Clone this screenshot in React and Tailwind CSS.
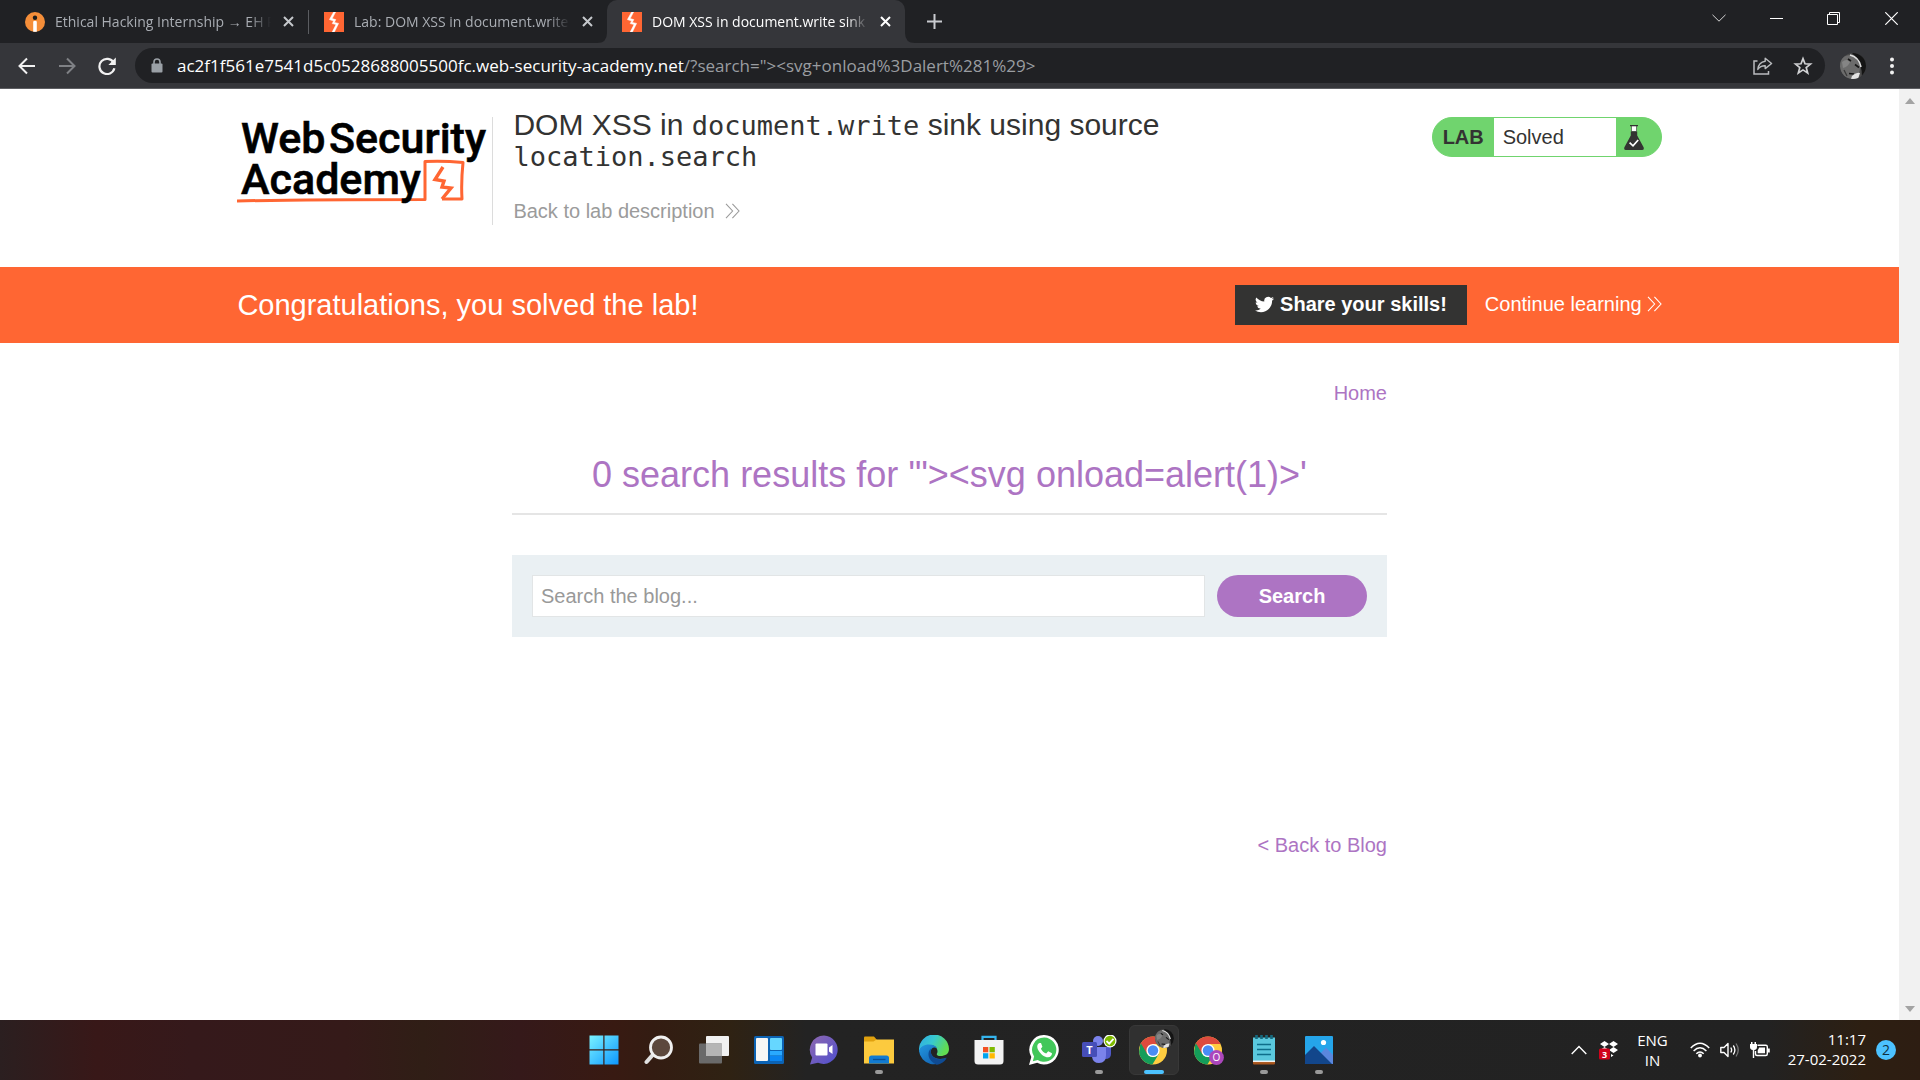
import React from "react";

function PortSwiggerIcon() {
  return (
    <svg viewBox="0 0 20 20" className="size-5 shrink-0" aria-hidden="true">
      <rect width="20" height="20" fill="#ff6633" />
      <path d="M9.6 0 L5.4 7.6 L9.6 9 L8.2 11.6 L12 12.6 L8.2 20 L10.4 20 L14.6 11.4 L10.4 10.4 L11.8 7.6 L8.2 6.6 L11.6 0 Z" fill="#fff" stroke="#fff" strokeWidth=".5" />
    </svg>
  );
}

function InternIcon() {
  return (
    <svg viewBox="0 0 20 20" className="size-5 shrink-0" aria-hidden="true">
      <circle cx="10" cy="10" r="10" fill="#f58e39" />
      <circle cx="10" cy="5.8" r="2.2" fill="#1c1c1c" />
      <path d="M8.2 9.5 Q10 7.8 11.8 9.5 V19.8 H8.2 Z" fill="#fff" />
    </svg>
  );
}

function Cross({ color }) {
  return (
    <svg viewBox="0 0 11 11" className="size-[11px]" aria-hidden="true">
      <path d="M1 1 L10 10 M10 1 L1 10" stroke={color} strokeWidth="2" />
    </svg>
  );
}

function Tab({ icon, title, active }) {
  return (
    <div
      className={
        active
          ? "relative flex h-full w-[298px] items-center rounded-t-[10px] bg-[#35363a] pl-[15px] pr-3.5 text-white"
          : "relative flex h-full w-[298px] items-center pl-[15px] pr-3.5 text-[#a9adb3]"
      }
    >
      {icon}
      <span className="ml-2.5 flex-1 overflow-hidden whitespace-nowrap text-[14px] leading-5 [mask-image:linear-gradient(to_right,#000_90%,transparent)]">
        {title}
      </span>
      <button aria-label="Close tab" className="ml-3">
        <Cross color={active ? "#ffffff" : "#c5c8cc"} />
      </button>
      {active && (
        <svg viewBox="0 0 10 10" className="absolute bottom-0 -left-2.5 size-2.5" aria-hidden="true">
          <path d="M10 0 V10 H0 Q10 10 10 0Z" fill="#35363a" />
        </svg>
      )}
      {active && (
        <svg viewBox="0 0 10 10" className="absolute bottom-0 -right-2.5 size-2.5" aria-hidden="true">
          <path d="M0 0 V10 H10 Q0 10 0 0Z" fill="#35363a" />
        </svg>
      )}
    </div>
  );
}

function LionAvatar({ className }) {
  return (
    <svg viewBox="0 0 26 26" className={className} aria-hidden="true">
      <defs>
        <clipPath id="avatarClip">
          <circle cx="13" cy="13" r="13" />
        </clipPath>
      </defs>
      <g clipPath="url(#avatarClip)">
        <rect width="26" height="26" fill="#4a4a4a" />
        <path d="M12 0 H26 V26 H22 Q23 10 12 0Z" fill="#141414" />
        <path d="M0 8 Q4 1 12 2 Q20 6 20 14 Q20 22 14 26 H6 Q-1 20 0 8Z" fill="#6c6c6c" />
        <path d="M2 9 Q7 5 10 9 Q8 14 3 15Z" fill="#858585" />
        <path d="M10 2 Q19 4 21 14" stroke="#dedede" strokeWidth="1.6" fill="none" />
        <path d="M8 6 L11 8 M15 11.500 L19 14.500 M9 20.500 L14 21" stroke="#161616" strokeWidth="1.6" />
        <path d="M12 23 Q17 19 20 20 L18 26 H11Z" fill="#e2e2e2" />
        <path d="M4 17 L7 23" stroke="#3a3a3a" strokeWidth="1.2" />
      </g>
    </svg>
  );
}

function BrowserChrome() {
  return (
    <header className="font-['Open_Sans',sans-serif]">
      <div className="flex h-[43px] items-stretch bg-[#202124] pl-2.5">
        <Tab icon={<InternIcon />} title="Ethical Hacking Internship → EH P" />
        <div className="my-auto h-6 w-px bg-[#5b5d61]" />
        <Tab icon={<PortSwiggerIcon />} title="Lab: DOM XSS in document.write" />
        <Tab icon={<PortSwiggerIcon />} title="DOM XSS in document.write sink" active />
        <button aria-label="New tab" className="ml-[22px]">
          <svg viewBox="0 0 15 15" className="size-[15px]" aria-hidden="true">
            <path d="M7.5 0 V15 M0 7.5 H15" stroke="#c9cbcf" strokeWidth="2" />
          </svg>
        </button>
        <div className="ml-auto flex h-9 items-center">
          <button aria-label="Search tabs" className="flex w-[58px] justify-center">
            <svg viewBox="0 0 14 8" className="h-2 w-3.5" aria-hidden="true">
              <path d="M.5 .8 L7 7.2 L13.5 .8" stroke="#d5d5d5" fill="none" />
            </svg>
          </button>
          <button aria-label="Minimize" className="flex w-[57px] justify-center">
            <svg viewBox="0 0 13 13" className="size-[13px]" aria-hidden="true">
              <path d="M0 6.5 H13" stroke="#fff" />
            </svg>
          </button>
          <button aria-label="Restore" className="flex w-[57px] justify-center">
            <svg viewBox="0 0 13 13" className="size-[13px]" aria-hidden="true">
              <path d="M.5 2.5 H10.5 V12.5 H.5Z M2.5 2.5 V.5 H12.5 V10.5 H10.5" stroke="#fff" fill="none" />
            </svg>
          </button>
          <button aria-label="Close" className="flex w-[58px] justify-center">
            <svg viewBox="0 0 13 13" className="size-[13px]" aria-hidden="true">
              <path d="M.3 .3 L12.7 12.7 M12.7 .3 L.3 12.7" stroke="#fff" strokeWidth="1.2" />
            </svg>
          </button>
        </div>
      </div>
      <div className="flex h-[46px] items-center border-b border-[#5d5e62] bg-[#35363a] pl-[18px] pr-[26px]">
        <button aria-label="Back">
          <svg viewBox="0 0 18 18" className="size-[18px]" aria-hidden="true">
            <path d="M17 9 H2 M9 1.5 L1.5 9 L9 16.5" stroke="#f1f1f1" strokeWidth="2" fill="none" />
          </svg>
        </button>
        <button aria-label="Forward" className="ml-[22px]">
          <svg viewBox="0 0 18 18" className="size-[18px]" aria-hidden="true">
            <path d="M1 9 H16 M9 1.5 L16.5 9 L9 16.5" stroke="#7f8185" strokeWidth="2" fill="none" />
          </svg>
        </button>
        <button aria-label="Reload" className="ml-[22px]">
          <svg viewBox="0 0 18 18" className="size-[18px]" aria-hidden="true">
            <path d="M15.6 5.6 A7.6 7.6 0 1 0 16.4 11.3" stroke="#f1f1f1" strokeWidth="2.2" fill="none" />
            <path d="M17.8 0.6 V8 H10.4Z" fill="#f1f1f1" />
          </svg>
        </button>
        <div className="ml-[19px] flex h-[35px] flex-1 items-center rounded-full bg-[#202124] pl-4 pr-3">
          <svg viewBox="0 0 12 15" className="h-[15px] w-3" aria-hidden="true">
            <rect x=".5" y="5.5" width="11" height="9" rx="1" fill="#9aa0a6" />
            <path d="M3 6 V4 a3 3 0 0 1 6 0 V6" stroke="#9aa0a6" strokeWidth="1.6" fill="none" />
          </svg>
          <div className="ml-3.5 flex-1 whitespace-nowrap text-[17px] leading-6 text-[#9a9da1]">
            <span className="text-white">ac2f1f561e7541d5c0528688005500fc.web-security-academy.net</span>
            {'/?search="><svg+onload%3Dalert%281%29>'}
          </div>
          <button aria-label="Share">
            <svg viewBox="0 0 20 18" className="h-[18px] w-5" aria-hidden="true">
              <path d="M4.5 4 H1 V17 H15.5 V14" stroke="#b9bbbe" strokeWidth="1.5" fill="none" />
              <path d="M12.2 1.2 L18.6 6.5 L12.2 11.6 V8.8 Q7.6 8.6 4.8 12.4 Q5.6 5 12.2 4.2Z" stroke="#b9bbbe" strokeWidth="1.4" fill="none" strokeLinejoin="round" />
            </svg>
          </button>
          <button aria-label="Bookmark" className="ml-5">
            <svg viewBox="0 0 20 20" className="size-5" aria-hidden="true">
              <path d="M10 2.6 L12 7.8 L17.5 8.1 L13.2 11.6 L14.7 17 L10 13.9 L5.3 17 L6.8 11.6 L2.5 8.1 L8 7.8Z" stroke="#d0d1d3" strokeWidth="1.7" fill="none" />
            </svg>
          </button>
        </div>
        <button aria-label="Profile" className="ml-[15px]">
          <LionAvatar className="size-[26px]" />
        </button>
        <button aria-label="Menu" className="ml-6">
          <svg viewBox="0 0 4 18" className="h-[18px] w-1" aria-hidden="true">
            <circle cx="2" cy="2.5" r="2" fill="#f1f1f1" />
            <circle cx="2" cy="9" r="2" fill="#f1f1f1" />
            <circle cx="2" cy="15.5" r="2" fill="#f1f1f1" />
          </svg>
        </button>
      </div>
    </header>
  );
}

function AcademyLogo() {
  return (
    <svg viewBox="0 0 255 108" className="h-[108px] w-[255px]" role="img" aria-label="Web Security Academy">
      <path d="M0 84 Q60 82.500 188 82.500 V44.500 Q206 43.500 226 45.500 Q224 65 225 82 L205 82" fill="none" stroke="#ff6633" strokeWidth="3" strokeLinejoin="round" />
      <path d="M206 50 L198 62.500 L207 64 L205 70 L214 71 L205 82" fill="none" stroke="#ff6633" strokeWidth="3.4" />
      <g fill="#000" stroke="#000" strokeWidth=".6" fontFamily="Roboto, sans-serif" fontSize="43" fontWeight="500">
        <text x="4" y="36">Web</text>
        <text x="92" y="36">Security</text>
        <text x="4" y="77">Academy</text>
      </g>
    </svg>
  );
}

function Chevrons({ color }) {
  return (
    <svg viewBox="0 0 15 16" className="h-4 w-[15px] shrink-0" aria-hidden="true">
      <path d="M1 .8 L7.6 8 L1 15.2 M7.4 .8 L14 8 L7.4 15.2" stroke={color} strokeWidth="1.1" fill="none" />
    </svg>
  );
}

function LabStatus() {
  return (
    <div className="mt-[7px] flex h-10 w-[230px] items-stretch overflow-hidden rounded-full border border-[#70d46e] bg-[#70d46e] text-[20px] leading-[38px] text-[#333332]">
      <span className="w-[61px] pl-2.5 font-bold">LAB</span>
      <span className="w-[122px] bg-white pl-[9px]">Solved</span>
      <svg viewBox="0 0 20 25" className="ml-2 mt-[7px] h-[25px] w-5" aria-hidden="true">
        <path d="M6 .6 H14" stroke="#333332" strokeWidth="1.2" />
        <path d="M7.500 1 H12.500 V6.500 H7.500Z" fill="#fff" stroke="#333332" strokeWidth=".6" />
        <path d="M6.8 6.500 H13.2 V10.5 L19.6 22.2 Q20.5 25 18 25 H2 Q-.5 25 .4 22.2 L6.8 10.5Z" fill="#333332" />
        <path d="M5.6 17.6 L9 20.8 L14.2 15" stroke="#fff" strokeWidth="1.7" fill="none" />
      </svg>
    </div>
  );
}

function Page() {
  return (
    <div className="flex min-h-0 flex-1 bg-white font-['Liberation_Sans',Arial,sans-serif] text-[20px] leading-[30px] text-[#333332]">
      <div className="flex-1">
        <section className="mx-auto flex h-[178px] w-3/4 items-start pt-[21px]">
          <a href="#academy" className="mt-[7px] shrink-0 border-r border-[#dcdcdc]">
            <AcademyLogo />
          </a>
          <div className="ml-5 flex-1">
            <h2 className="max-w-[700px] text-[30px] leading-[30px]">
              DOM XSS in <code className="font-['DejaVu_Sans_Mono',monospace] text-[27px]">document.write</code> sink using source{" "}
              <code className="font-['DejaVu_Sans_Mono',monospace] text-[27px]">location.search</code>
            </h2>
            <a href="#lab" className="mt-6 flex items-center gap-2.5 text-[#9b9b9b]">
              Back to lab description <Chevrons color="#9b9b9b" />
            </a>
          </div>
          <LabStatus />
        </section>

        <section className="bg-[#ff6633] text-white">
          <div className="mx-auto flex h-[76px] w-3/4 items-center">
            <h4 className="flex-1 text-[29px]">Congratulations, you solved the lab!</h4>
            <button className="flex h-10 items-center gap-1.5 bg-[#333332] px-5 pb-0.5 font-bold">
              <svg viewBox="0 0 24 24" className="size-[19px]" aria-hidden="true">
                <path fill="#fff" d="M23.95 4.57a10 10 0 0 1-2.82.77 4.96 4.96 0 0 0 2.16-2.72c-.95.55-2 .96-3.13 1.18a4.92 4.92 0 0 0-8.38 4.48C7.69 8.1 4.07 6.13 1.64 3.16a4.92 4.92 0 0 0 1.52 6.57 4.9 4.9 0 0 1-2.23-.61v.06a4.92 4.92 0 0 0 3.95 4.83 5 5 0 0 1-2.21.08 4.94 4.94 0 0 0 4.6 3.42A9.87 9.87 0 0 1 0 19.54a13.99 13.99 0 0 0 7.55 2.21c9.05 0 14-7.5 14-13.98 0-.21 0-.42-.02-.63a9.94 9.94 0 0 0 2.46-2.55z" />
              </svg>
              Share your skills!
            </button>
            <a href="#continue" className="ml-[18px] flex items-center gap-[5px] pb-0.5">
              Continue learning <Chevrons color="#ffffff" />
            </a>
          </div>
        </section>

        <main className="mx-auto mt-[35px] w-[875px] max-w-full">
          <nav className="flex justify-end text-[#ad74c3]">
            <a href="#home">Home</a>
          </nav>
          <h1 className="mt-11 text-center text-[36px] leading-[45px] text-[#ad74c3]">
            {"0 search results for '\"><svg onload=alert(1)>'"}
          </h1>
          <hr className="mt-4 border-t-2 border-[#e5e5e5]" />
          <form className="mt-10 flex gap-3 bg-[#eaf0f3] p-5" onSubmit={(e) => e.preventDefault()}>
            <input
              type="text"
              aria-label="Search the blog"
              placeholder="Search the blog..."
              className="h-[42px] min-w-0 flex-1 border border-[#e2e5e6] bg-white px-2 placeholder:text-[#999999]"
            />
            <button className="h-[42px] w-[150px] rounded-full bg-[#ad74c3] font-bold text-white">Search</button>
          </form>
          <div className="mt-[193px] flex justify-end text-[#ad74c3]">
            <a href="#blog">&lt; Back to Blog</a>
          </div>
        </main>
      </div>
      <div className="flex w-[21px] flex-col items-center justify-between bg-[#f1f1f1] py-2" aria-hidden="true">
        <svg viewBox="0 0 10 6" className="mt-px h-1.5 w-2.5"><path d="M5 0 L10 6 H0Z" fill="#a3a3a3" /></svg>
        <svg viewBox="0 0 10 6" className="h-1.5 w-2.5"><path d="M5 6 L10 0 H0Z" fill="#a3a3a3" /></svg>
      </div>
    </div>
  );
}

function Chrome({ children, id }) {
  return (
    <svg viewBox="0 0 30 30" className="size-[30px]">
      <clipPath id={id}><circle cx="14" cy="15.5" r="14" /></clipPath>
      <g clipPath={"url(#" + id + ")"}>
        <rect width="30" height="30" fill="#ffcd40" />
        <path d="M0 0 H30 V9 H14 L8 19 L0 8Z" fill="#dd4b3e" />
        <path d="M1.5 7.5 L8.2 19 L14 22.3 L19.8 19 L12.5 31 L-2 30 Z" fill="#149d5a" />
      </g>
      <circle cx="14" cy="15.5" r="6.6" fill="#fff" />
      <circle cx="14" cy="15.5" r="5.2" fill="#4a8cf5" />
      {children}
    </svg>
  );
}

const APPS = [
  {
    name: "Start",
    icon: (
      <svg viewBox="0 0 30 30" className="size-[30px]">
        <defs>
          <linearGradient id="win" gradientUnits="userSpaceOnUse" x1="0" y1="0" x2="30" y2="30">
            <stop offset="0" stopColor="#7cf4ff" /><stop offset="1" stopColor="#0b95ff" />
          </linearGradient>
        </defs>
        <path d="M.5 .5 H14.3 V14.3 H.5Z M15.5 .5 H29.5 V14.3 H15.5Z M.5 15.5 H14.3 V29.5 H.5Z M15.5 15.5 H29.5 V29.5 H15.5Z" fill="url(#win)" />
      </svg>
    ),
  },
  {
    name: "Search",
    icon: (
      <svg viewBox="0 0 30 30" className="size-[30px]">
        <path d="M9.5 19 L2.5 27" stroke="#e1e1e1" strokeWidth="4" strokeLinecap="round" />
        <circle cx="17" cy="12.5" r="10.5" fill="#5c483d" stroke="#f0f0f0" strokeWidth="2.8" />
      </svg>
    ),
  },
  {
    name: "Task view",
    icon: (
      <svg viewBox="0 0 30 30" className="size-[30px]">
        <rect x="7" y="1" width="23" height="20" rx="1" fill="#f1f1f1" />
        <rect x="0" y="8.500" width="23" height="20" rx="1" fill="#6a6a6a" />
        <rect x="7" y="8.500" width="16" height="12.500" fill="#b5b5b5" />
      </svg>
    ),
  },
  {
    name: "Widgets",
    icon: (
      <svg viewBox="0 0 30 30" className="size-[30px]">
        <rect y="1" width="30" height="28" rx="1.500" fill="#0c63b4" />
        <rect x="2" y="3" width="12" height="23" rx="1" fill="#f6f6f6" />
        <rect x="16" y="3" width="12" height="12" rx="1" fill="#66d7ff" />
        <rect x="16" y="16" width="12" height="4.500" fill="#29a9ff" />
        <rect x="16" y="21" width="12" height="5" fill="#0a85f2" />
      </svg>
    ),
  },
  {
    name: "Chat",
    icon: (
      <svg viewBox="0 0 30 30" className="size-[30px]">
        <defs>
          <linearGradient id="chat" x1="0" y1="0" x2="1" y2="1">
            <stop offset="0" stopColor="#8f68ae" /><stop offset="1" stopColor="#4e4fd0" />
          </linearGradient>
        </defs>
        <path d="M15 .5 A14.200 14.200 0 1 1 9 27.800 L1 29.500 L3.200 22.500 A14.200 14.200 0 0 1 15 .5Z" fill="url(#chat)" />
        <rect x="6.500" y="8.500" width="12" height="12" rx="1" fill="#fff" />
        <path d="M20 12.500 L23.500 10 V19 L20 16.500Z" fill="#fff" />
      </svg>
    ),
  },
  {
    name: "File Explorer",
    dot: true,
    icon: (
      <svg viewBox="0 0 30 30" className="size-[30px]">
        <path d="M0 2.500 Q0 1.500 1 1.500 H10 L13 5 V10 H0Z" fill="#e0a10e" />
        <path d="M0 6.500 H9.500 L12.500 4.500 H30 V28.500 H0Z" fill="#fcca3e" />
        <path d="M5 28.500 V23 Q5 20.500 7.500 20.500 H22.500 Q25 20.500 25 23 V28.500Z" fill="#127bd1" />
        <path d="M9 24.500 H21.500" stroke="#0b4f96" strokeWidth="1.300" />
      </svg>
    ),
  },
  {
    name: "Edge",
    icon: (
      <svg viewBox="0 0 30 30" className="size-[30px]">
        <defs>
          <linearGradient id="edgeTop" x1="0" y1="0" x2="1" y2=".4">
            <stop offset="0" stopColor="#2fa9e6" /><stop offset=".5" stopColor="#38c9cf" /><stop offset="1" stopColor="#61dd52" />
          </linearGradient>
          <linearGradient id="edgeBase" x1="0" y1="0" x2="1" y2="1">
            <stop offset="0" stopColor="#2397e0" /><stop offset="1" stopColor="#0e57a8" />
          </linearGradient>
        </defs>
        <path d="M0 15 A15 15 0 0 1 30 14 C30 19 26 21 21.500 21 C18.500 21 17.200 19.800 18 18.500 C20 14 16 10 11 10 C5 10 1 13 0 17Z" fill="url(#edgeTop)" />
        <path d="M0 16 C1 12 5 9.500 10 9.500 C14 9.500 17 11 18 13 C13 11 11 15 12 18.500 C13.500 23.500 21 25.500 27.500 22.500 A15 15 0 0 1 0 16Z" fill="url(#edgeBase)" />
        <path d="M12 13.500 C8 17 8 25 17.500 29.800 C22 29 26 26.500 27.600 23 C22 25.500 14.500 24 12.500 19.500 C11.600 17 11.500 15 12 13.500Z" fill="#0f4b93" />
      </svg>
    ),
  },
  {
    name: "Microsoft Store",
    icon: (
      <svg viewBox="0 0 30 30" className="size-[30px]">
        <path d="M8.500 6 V1.800 H21.500 V6" stroke="#35b5ee" strokeWidth="2.200" fill="none" />
        <path d="M.5 5 H29.500 V26 Q29.500 29.500 26 29.500 H4 Q.5 29.500 .5 26Z" fill="#f3f3f3" />
        <path d="M9 12 H14.300 V17.300 H9Z" fill="#f25022" /><path d="M15.500 12 H20.800 V17.300 H15.500Z" fill="#7fba00" />
        <path d="M9 18.200 H14.300 V23.500 H9Z" fill="#00a4ef" /><path d="M15.500 18.200 H20.800 V23.500 H15.500Z" fill="#ffb900" />
      </svg>
    ),
  },
  {
    name: "WhatsApp",
    icon: (
      <svg viewBox="0 0 30 30" className="size-[30px]">
        <path d="M15.300 0 A14.700 14.700 0 1 1 8.200 27.700 L0 30 L2.300 22 A14.700 14.700 0 0 1 15.300 0Z" fill="#fff" />
        <path d="M15.300 2.600 A12.100 12.100 0 1 1 8.700 24.900 L3.800 26.200 L5.100 21.400 A12.100 12.100 0 0 1 15.300 2.600Z" fill="#42c75a" />
        <path d="M10.500 8 C8 9 7.500 12 9.500 15.500 C12 19.500 15.500 22.300 19 22.300 C21.500 22.300 23 20.500 23 18.300 L19.200 16.300 L17.200 18.600 C14.800 17.700 13 16 11.900 13.700 L13.400 11.800 L12 8Z" fill="#fff" />
      </svg>
    ),
  },
  {
    name: "Teams",
    dot: true,
    icon: (
      <svg viewBox="0 0 36 30" className="h-[30px] w-9">
        <circle cx="17" cy="6" r="5" fill="#7b83eb" />
        <path d="M22 12 H30 V19 Q30 24 24 24Z" fill="#5059c9" />
        <path d="M11 12 H25 V20 Q25 28 18 28 Q12 28 11 22Z" fill="#7b83eb" />
        <rect x="1" y="7" width="15" height="15" rx="1.500" fill="#464eb8" />
        <text x="8.500" y="18.500" fontFamily="Open Sans, sans-serif" fontWeight="700" fontSize="11" fill="#fff" textAnchor="middle">T</text>
        <circle cx="29" cy="6" r="6.500" fill="#fff" />
        <circle cx="29" cy="6" r="5.300" fill="#7fba00" />
        <path d="M25.500 6 L28.200 8.600 L32.500 3.800" stroke="#fff" strokeWidth="1.800" fill="none" />
      </svg>
    ),
  },
  {
    name: "Chrome",
    active: true,
    icon: (
      <span className="relative block">
        <Chrome id="chromeA" />
        <LionAvatar className="absolute -top-1.5 left-4 size-[19px]" />
      </span>
    ),
  },
  {
    name: "Chrome, second profile",
    icon: (
      <Chrome id="chromeB">
        <circle cx="22.500" cy="22.500" r="7.400" fill="#ab47bc" />
        <text x="22.500" y="26" fontFamily="Open Sans, sans-serif" fontSize="10" fill="#fff" textAnchor="middle">O</text>
      </Chrome>
    ),
  },
  {
    name: "Notepad",
    dot: true,
    icon: (
      <svg viewBox="0 0 30 30" className="size-[30px]">
        <rect x="4" y="25" width="22" height="4.500" rx="1" fill="#a8551c" />
        <path d="M4 2.500 H26 V27 H4Z" fill="#5ac8dd" />
        <path d="M4 26.300 H26" stroke="#f3f3f3" strokeWidth="1.500" />
        <path d="M7.500 0 V4 M12.500 0 V4 M17.500 0 V4 M22.500 0 V4" stroke="#156a7f" strokeWidth="2.600" />
        <path d="M8 9.500 H22 M8 14.500 H22 M8 19.500 H22" stroke="#0e6e8a" strokeWidth="1.700" />
      </svg>
    ),
  },
  {
    name: "Photos",
    dot: true,
    icon: (
      <svg viewBox="0 0 30 30" className="size-[30px]">
        <rect x="1" y="1" width="28" height="28" rx="1" fill="#25a5ea" />
        <path d="M29 20 L22 12.500 L16 19 L26 29 H29Z" fill="#5a87dd" />
        <path d="M1 20 L10 11 L28 29 H1Z" fill="#12468b" />
        <circle cx="19.500" cy="7.500" r="2.600" fill="#fff" />
      </svg>
    ),
  },
];

function Tray() {
  return (
    <div className="flex items-center justify-end pr-6 text-[15px] leading-5 text-white">
      <svg viewBox="0 0 16 10" className="h-2.5 w-4" aria-hidden="true">
        <path d="M.7 9 L8 1.500 L15.300 9" stroke="#fff" strokeWidth="1.400" fill="none" />
      </svg>
      <svg viewBox="0 0 20 20" className="ml-3 size-5" aria-hidden="true">
        <path d="M5.500 1 L10 4 L14.500 1 L19 4 L14.500 7 L10 4 L5.500 7 L1 4Z M14.500 7 L19 10 L14.500 13 L10 10Z M5.500 7 L10 10 L5.500 13 L1 10Z M12 14 L14.500 15.500 L12 17Z" fill="#fff" />
        <rect x="0" y="8.500" width="11" height="11" rx="1.500" fill="#d0021b" />
        <text x="5.500" y="17.500" fontFamily="Open Sans, sans-serif" fontWeight="700" fontSize="9" fill="#fff" textAnchor="middle">3</text>
      </svg>
      <div className="ml-[18px] text-center">ENG<br />IN</div>
      <svg viewBox="0 0 20 16" className="ml-[22px] h-4 w-5" aria-hidden="true">
        <path d="M.8 6 Q10 -3.500 19.200 6 M3.600 9 Q10 2.500 16.400 9 M6.300 11.800 Q10 8 13.700 11.800" stroke="#fff" strokeWidth="1.500" fill="none" />
        <circle cx="10" cy="13.500" r="1.900" fill="#fff" />
      </svg>
      <svg viewBox="0 0 20 16" className="ml-2.5 h-4 w-5" aria-hidden="true">
        <path d="M.8 5.500 H4 L8 1.500 V14.500 L4 10.500 H.8Z" stroke="#fff" strokeWidth="1.400" fill="none" strokeLinejoin="round" />
        <path d="M10.800 5.500 Q12.500 8 10.800 10.500 M13.300 3.500 Q16.500 8 13.300 12.500" stroke="#fff" strokeWidth="1.300" fill="none" />
        <path d="M16 1.500 Q20.500 8 16 14.500" stroke="#777" strokeWidth="1.300" fill="none" />
      </svg>
      <svg viewBox="0 0 20 18" className="ml-2.5 h-[18px] w-5" aria-hidden="true">
        <path d="M7.500 4.200 H15.800 Q17.300 4.200 17.300 5.700 V13 Q17.300 14.500 15.800 14.500 H7 Q5.500 14.500 5.500 13 V10" stroke="#fff" strokeWidth="1.400" fill="none" />
        <path d="M9.200 6.500 H15 V12.300 H7.700 V9.500Z M18 7.500 H19.800 V11.500 H18Z" fill="#fff" />
        <path d="M0 3 H1 V1 H2.500 V3 H4.500 V1 H6 V3 H7 V6 Q7 8.500 4.200 9 V17 H2.800 V9 Q0 8.500 0 6Z" fill="#fff" />
      </svg>
      <div className="ml-[18px] pb-0.5 text-right">11:17<br />27-02-2022</div>
      <span className="ml-2.5 flex size-5 items-center justify-center rounded-full bg-[#4cc2ff] text-[14px] text-[#10303f]">2</span>
    </div>
  );
}

function Taskbar() {
  return (
    <footer className="grid h-[60px] grid-cols-[1fr_auto_1fr] items-center bg-[linear-gradient(to_right,#2b1f20_0%,#381818_5%,#35191b_10%,#351a19_18%,#301e16_22%,#35191a_27%,#381a12_32%,#331c12_34%,#2f2213_38%,#232323_42%,#222222_92%,#2d1f12_97%,#2d1d12_100%)] pl-0.5 font-['Open_Sans',sans-serif]">
      <div />
      <nav className="flex gap-[5px]" aria-label="Taskbar">
        {APPS.map((app) => (
          <button
            key={app.name}
            aria-label={app.name}
            className={
              app.active
                ? "relative flex size-[50px] items-center justify-center rounded-md border border-[#383838] bg-[#303030]"
                : "relative flex size-[50px] items-center justify-center"
            }
          >
            {app.icon}
            {app.dot && <span className="absolute bottom-px h-1 w-2 rounded-full bg-[#9a9a9a]" />}
            {app.active && <span className="absolute bottom-0 h-1 w-5 rounded-full bg-[#4cc2ff]" />}
          </button>
        ))}
      </nav>
      <Tray />
    </footer>
  );
}

export default function App() {
  return (
    <div className="flex min-h-screen flex-col bg-white">
      <BrowserChrome />
      <Page />
      <Taskbar />
    </div>
  );
}
